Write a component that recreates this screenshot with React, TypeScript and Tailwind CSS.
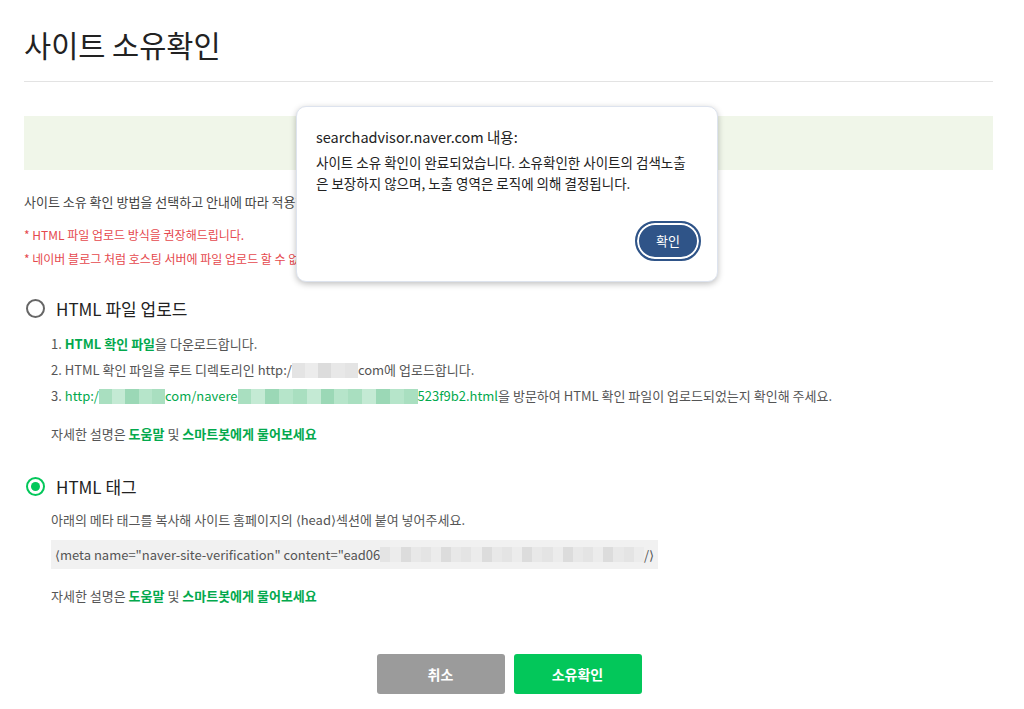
import React from "react"

const FONT = { fontFamily: '"Noto Sans CJK KR", "Noto Sans", sans-serif' }

function Blur({ w, green }: { w: number; green?: boolean }) {
  // pixelated redaction block
  const cells = Math.max(1, Math.round(w / 14))
  return (
    <span className="inline-flex h-[15px] align-middle" style={{ width: w }}>
      {Array.from({ length: cells }).map((_, i) => (
        <span
          key={i}
          className="flex-1 h-full"
          style={{
            background: green
              ? ["#a9dfc0", "#c4ead4", "#9bd8b6", "#b6e5ca"][i % 4]
              : ["#e4e4e4", "#ececec", "#dcdcdc", "#e8e8e8"][i % 4],
          }}
        />
      ))}
    </span>
  )
}

function Radio({ checked }: { checked?: boolean }) {
  return checked ? (
    <span className="w-[19px] h-[19px] rounded-full border-[2.5px] border-[#03c75a] flex items-center justify-center">
      <span className="w-[9px] h-[9px] rounded-full bg-[#03c75a]" />
    </span>
  ) : (
    <span className="w-[19px] h-[19px] rounded-full border-[2px] border-[#666]" />
  )
}

function HelpLine() {
  return (
    <p className="text-[13px] text-[#555]">
      자세한 설명은 <span className="text-[#03a94d] font-semibold">도움말</span> 및{" "}
      <span className="text-[#03a94d] font-semibold">스마트봇에게 물어보세요</span>
    </p>
  )
}

export default function App() {
  return (
    <div className="relative w-[1024px] h-[709px] bg-white overflow-hidden" style={FONT}>
      <div className="ml-[24px] w-[969px] pt-[24px]">
        <h1 className="text-[29.5px] text-[#222] leading-[40px] pb-[17px] border-b border-[#e3e3e3]">사이트 소유확인</h1>

        <div className="mt-[34px] h-[54px] bg-[#f0f6e9]" />

        <p className="mt-[22px] text-[13px] text-[#444] leading-[20px]">
          사이트 소유 확인 방법을 선택하고 안내에 따라 적용해 주세요.
        </p>
        <p className="mt-[14px] text-[12px] text-[#e5484d] leading-[18px]">* HTML 파일 업로드 방식을 권장해드립니다.</p>
        <p className="mt-[6px] text-[12px] text-[#e5484d] leading-[18px]">
          * 네이버 블로그 처럼 호스팅 서버에 파일 업로드 할 수 없는 경우 HTML 태그 방식을 이용해 주세요.
        </p>

        <div className="mt-[28px] flex items-center gap-[11px] pl-[2px]">
          <Radio />
          <span className="text-[17px] text-[#222]">HTML 파일 업로드</span>
        </div>
        <div className="pl-[27px] mt-[12px] text-[13px] text-[#555] flex flex-col gap-[7px] leading-[19px]">
          <p>
            1. <span className="text-[#03a94d] font-semibold">HTML 확인 파일</span>을 다운로드합니다.
          </p>
          <p>
            2. HTML 확인 파일을 루트 디렉토리인 http:/<Blur w={66} />com에 업로드합니다.
          </p>
          <p>
            3.{" "}
            <span className="text-[#03a94d]">
              http:/<Blur w={66} green />com/navere<Blur w={180} green />523f9b2.html
            </span>
            을 방문하여 HTML 확인 파일이 업로드되었는지 확인해 주세요.
          </p>
        </div>
        <div className="pl-[27px] mt-[19px] leading-[19px]">
          <HelpLine />
        </div>

        <div className="mt-[31px] flex items-center gap-[11px] pl-[2px]">
          <Radio checked />
          <span className="text-[17px] text-[#222]">HTML 태그</span>
        </div>
        <div className="pl-[27px] mt-[11px] leading-[19px]">
          <p className="text-[13px] text-[#555]">아래의 메타 태그를 복사해 사이트 홈페이지의 ⟨head⟩섹션에 붙여 넣어주세요.</p>
          <div className="mt-[11px] w-[607px] h-[29px] bg-[#f1f1f1] flex items-center px-[4px] text-[13px] text-[#555] whitespace-nowrap">
            ⟨meta name="naver-site-verification" content="ead06<Blur w={358} /> /⟩
          </div>
          <div className="mt-[17px]">
            <HelpLine />
          </div>
        </div>

        <div className="mt-[49px] flex justify-center gap-[9px] pl-[1px]">
          <button className="w-[128px] h-[40px] rounded-[3px] bg-[#9b9b9b] text-white text-[14px] font-bold">취소</button>
          <button className="w-[128px] h-[40px] rounded-[3px] bg-[#03c75a] text-white text-[14px] font-bold">소유확인</button>
        </div>
      </div>

      {/* alert dialog */}
      <div className="absolute left-[296px] top-[106px] w-[422px] h-[176px] bg-white rounded-[10px] border border-[#dde3ee] shadow-[0_2px_6px_rgba(0,0,0,0.25)] px-[19px] pt-[19px]">
        <p className="text-[14.5px] text-[#222] leading-[22px]">searchadvisor.naver.com 내용:</p>
        <p className="mt-[4px] text-[13.5px] text-[#222] leading-[21px] whitespace-nowrap">
          사이트 소유 확인이 완료되었습니다. 소유확인한 사이트의 검색노출
          <br />은 보장하지 않으며, 노출 영역은 로직에 의해 결정됩니다.
        </p>
        <div className="flex justify-end mt-[27px]">
          <button className="w-[66px] h-[40px] rounded-full bg-[#2f5488] border-[2px] border-[#2f5488] text-white text-[13px] shadow-[inset_0_0_0_2px_#ffffff] -mr-[3px]">
            확인
          </button>
        </div>
      </div>
    </div>
  )
}
